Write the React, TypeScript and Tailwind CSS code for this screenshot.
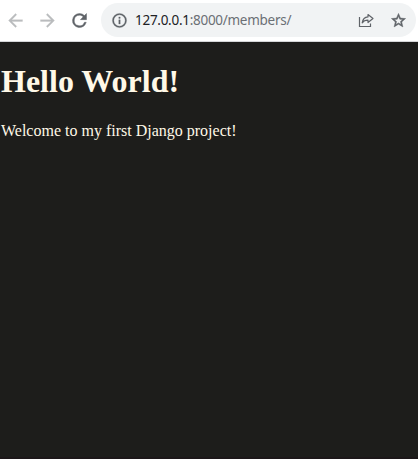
import React from "react";

function Glyph({ className, children }: { className: string; children: React.ReactNode }) {
  return (
    <svg viewBox="0 0 24 24" fill="currentColor" stroke="currentColor" className={`shrink-0 ${className}`}>
      {children}
    </svg>
  );
}

function Toolbar() {
  return (
    <header className="flex h-[42px] items-start border-b border-[#d5d6d8] bg-white pt-[3px] pr-[2px] pl-[4.5px] font-['Noto_Sans',sans-serif]">
      <nav className="flex h-[34px] w-[96.5px] shrink-0 items-center gap-[11px]">
        <Glyph className="size-[21px] stroke-[0.3] text-[#babcbe]">
          <path d="M20 11H7.83l5.59-5.59L12 4l-8 8 8 8 1.41-1.41L7.83 13H20v-2z" />
        </Glyph>
        <Glyph className="size-[21px] stroke-[0.3] text-[#babcbe]">
          <path d="M12 4l-1.41 1.41L16.17 11H4v2h12.17l-5.58 5.59L12 20l8-8z" />
        </Glyph>
        <Glyph className="size-[21px] stroke-[0.5] text-[#5f6368]">
          <path d="M17.65 6.35A7.96 7.96 0 0 0 12 4a8 8 0 1 0 7.73 10h-2.08A6 6 0 1 1 12 6c1.66 0 3.14.69 4.22 1.78L13 11h7V4z" />
        </Glyph>
      </nav>
      <div className="flex h-[34px] flex-1 items-center rounded-full bg-[#f1f3f4] pr-[9.5px] pl-[9.5px]">
        <Glyph className="size-[17px] stroke-[0.4] text-[#5f6368]">
          <path d="M11 7h2v2h-2zm0 4h2v6h-2zm1-9a10 10 0 1 0 0 20 10 10 0 0 0 0-20zm0 18a8 8 0 1 1 0-16 8 8 0 0 1 0 16z" />
        </Glyph>
        <div className="ml-[7.5px] flex-1 text-[13.5px] leading-5 tracking-[-0.28px] whitespace-nowrap text-[#6b6f74]">
          <span className="text-[#202124]">127.0.0.1</span>:8000/members/
        </div>
        <svg viewBox="0 0 17 17" fill="none" stroke="#5f6368" strokeWidth="1.2" className="mr-[14.5px] size-[17px] shrink-0">
          <path d="M1.5 5v9.5h11v-3" />
          <path d="M10 2.5l5 4-5 4V8.2c-2.7 0-4.5.7-5.8 2.6.5-3.2 2.4-5.6 5.8-5.9z" strokeLinejoin="round" />
        </svg>
        <Glyph className="size-[17px] stroke-[0.7] text-[#5f6368]">
          <path d="M22 9.24l-7.19-.62L12 2 9.19 8.63 2 9.24l5.46 4.73L5.82 21 12 17.27 18.18 21l-1.63-7.03L22 9.24zM12 15.4l-3.76 2.27 1-4.28-3.32-2.88 4.38-.38L12 6.1l1.71 4.04 4.38.38-3.32 2.88 1 4.28L12 15.4z" />
        </Glyph>
      </div>
    </header>
  );
}

export default function App() {
  return (
    <div className="flex h-[459px] w-[418px] flex-col overflow-hidden bg-[#1d1d1b]">
      <Toolbar />
      <main className="flex-1 border-b-2 border-[#1c1719] pt-[21px] pl-px font-['Liberation_Serif',serif] text-[#fff8e7]">
        <h1 className="text-[32px] leading-[37px] font-bold">Hello World!</h1>
        <p className="mt-[22px] text-[16px] leading-[18px]">Welcome to my first Django project!</p>
      </main>
    </div>
  );
}
